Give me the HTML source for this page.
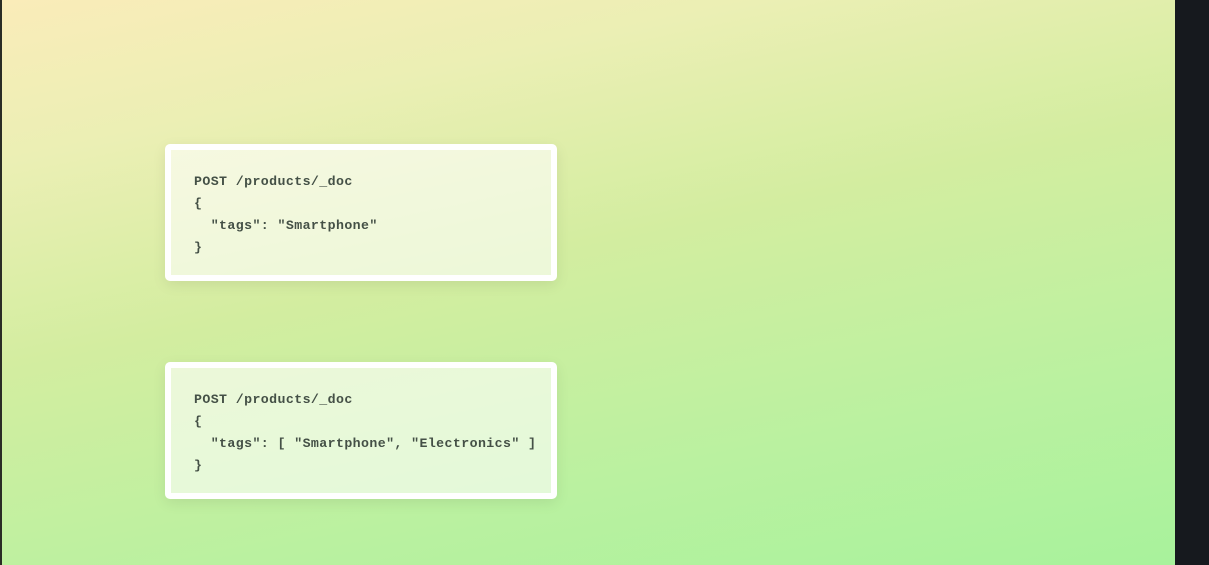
<!DOCTYPE html>
<html><head><style>
html,body{margin:0;padding:0;width:1209px;height:565px;overflow:hidden;background:#16191e}
.bg{position:absolute;left:2px;top:0;width:1173px;height:565px;background:linear-gradient(168deg,#faecb9 0%,#ebefb4 20%,#d3eda0 45%,#baf1a0 75%,#a8f29c 100%)}
.edge{position:absolute;left:0;top:0;width:2px;height:565px;background:#2a2c25}
.box{position:absolute;left:165px;width:380px;height:125px;border:6px solid #fff;border-radius:5px;background:rgba(255,255,255,0.6);box-shadow:0 4px 14px rgba(0,0,0,0.08)}
pre{margin:0;position:absolute;left:23px;top:21px;font-family:"Liberation Mono",monospace;font-weight:bold;font-size:13.25px;letter-spacing:0.4px;line-height:22px;color:#445046}
</style></head><body>
<div class="edge"></div>
<div class="bg"></div>
<div class="box" style="top:144px"><pre>POST /products/_doc
{
  "tags": "Smartphone"
}</pre></div>
<div class="box" style="top:362px"><pre>POST /products/_doc
{
  "tags": [ "Smartphone", "Electronics" ]
}</pre></div>
</body></html>
